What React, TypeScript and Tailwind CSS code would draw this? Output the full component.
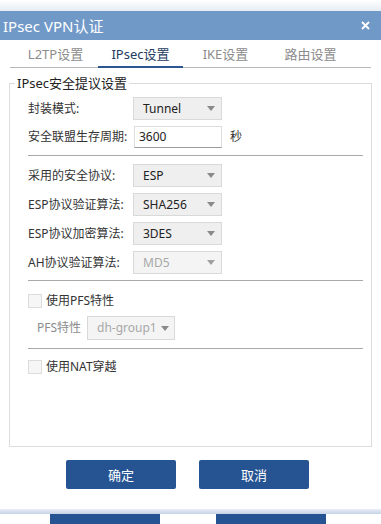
import React from "react";

type SelectRow = {
  label: string;
  value: string;
  disabled?: boolean;
};

const Arrow = ({ color = "#8a8a8a" }: { color?: string }) => (
  <svg width="8" height="5" viewBox="0 0 8 5">
    <path d="M0 0H8L4 5Z" fill={color} />
  </svg>
);

const Select = ({ value, disabled, className }: { value: string; disabled?: boolean; className?: string }) => (
  <div
    className={
      "h-[23px] flex items-center justify-between pl-[9px] pr-[6px] border border-[#d9d9d9] " +
      (disabled ? "bg-[#f4f4f4] text-[#a8a8a8] " : "bg-[#efefef] text-[#222] ") +
      (className ?? "")
    }
  >
    <span>{value}</span>
    <Arrow color={disabled ? "#a0a0a0" : "#8a8a8a"} />
  </div>
);

const Checkbox = ({ label }: { label: string }) => (
  <label className="flex items-center ml-[18px] h-[14px]">
    <span className="w-[14px] h-[14px] border border-[#dcdcdc] bg-[#f6f6f6]" />
    <span className="ml-[4px] text-[#333]">{label}</span>
  </label>
);

export default function App() {
  const algoRows: SelectRow[] = [
    { label: "采用的安全协议:", value: "ESP" },
    { label: "ESP协议验证算法:", value: "SHA256" },
    { label: "ESP协议加密算法:", value: "3DES" },
    { label: "AH协议验证算法:", value: "MD5", disabled: true },
  ];

  const tabs = ["L2TP设置", "IPsec设置", "IKE设置", "路由设置"];

  return (
    <div
      className="w-[381px] h-[524px] bg-white flex flex-col overflow-hidden text-[12px] leading-[16px] text-[#333]"
      style={{ fontFamily: '"Noto Sans", "Noto Sans CJK SC", sans-serif' }}
    >
      {/* 上方阴影 */}
      <div className="h-[11px] bg-gradient-to-b from-white to-[#e6ecf4]" />

      {/* 标题栏 */}
      <div className="h-[29px] bg-[#7199c8] flex items-center justify-between pl-[3px] pr-[11px] text-white">
        <span className="text-[15px] leading-[20px]">IPsec VPN认证</span>
        <svg width="9" height="9" viewBox="0 0 9 9">
          <path d="M1 1L8 8M8 1L1 8" stroke="white" strokeWidth="1.8" />
        </svg>
      </div>

      {/* 标签页 */}
      <div className="mx-[10px] h-[28px] border-b border-[#b8b8b8] flex items-end pl-[3px]">
        {tabs.map((t, i) => (
          <div
            key={t}
            className={
              "w-[85px] h-[27px] flex items-center justify-center text-[13px] " +
              (i === 1 ? "text-[#243b5e] border-b-[2px] border-[#2b5590] -mb-[1px]" : "text-[#8c8c8c]")
            }
          >
            {t}
          </div>
        ))}
      </div>

      {/* 设置区域 */}
      <fieldset className="mx-[9px] mt-[7px] h-[372px] border border-[#dcdcdc] pb-0">
        <legend className="ml-[5px] px-[2px] text-[13px] text-[#222]">IPsec安全提议设置</legend>

        <div className="flex items-center mt-[6px] pl-[18px]">
          <span className="w-[105px]">封装模式:</span>
          <Select value="Tunnel" className="w-[89px]" />
        </div>

        <div className="flex items-center mt-[6px] pl-[18px]">
          <span className="w-[106px]">安全联盟生存周期:</span>
          <div className="w-[88px] h-[22px] flex items-center pl-[4px] bg-white border border-[#dcdcdc] border-b-[#9a9a9a] text-[#222]">
            3600
          </div>
          <span className="ml-[8px]">秒</span>
        </div>

        <div className="ml-[18px] mr-[8px] mt-[7px] h-px bg-[#a9a9a9]" />

        <div className="flex flex-col gap-[6px] mt-[8px] pl-[18px]">
          {algoRows.map((r) => (
            <div key={r.label} className="flex items-center">
              <span className="w-[105px]">{r.label}</span>
              <Select value={r.value} disabled={r.disabled} className="w-[89px]" />
            </div>
          ))}
        </div>

        <div className="ml-[18px] mr-[8px] mt-[6px] h-px bg-[#a9a9a9]" />

        <div className="mt-[13px]">
          <Checkbox label="使用PFS特性" />
        </div>

        <div className="flex items-center mt-[8px] pl-[27px]">
          <span className="w-[50px] text-[#8c8c8c]">PFS特性</span>
          <div className="w-[88px] h-[24px] flex items-center justify-between pl-[9px] pr-[5px] border border-[#d9d9d9] bg-[#f4f4f4] text-[#a8a8a8] text-[12px] whitespace-nowrap">
            <span>dh-group1</span>
            <Arrow color="#8a8a8a" />
          </div>
        </div>

        <div className="ml-[18px] mr-[8px] mt-[8px] h-px bg-[#a9a9a9]" />

        <div className="mt-[11px]">
          <Checkbox label="使用NAT穿越" />
        </div>
      </fieldset>

      {/* 按钮 */}
      <div className="flex gap-[23px] mt-[13px] ml-[66px]">
        <button className="w-[110px] h-[29px] rounded-[2px] bg-[#265392] text-white text-[13px]">确定</button>
        <button className="w-[110px] h-[29px] rounded-[2px] bg-[#265392] text-white text-[13px]">取消</button>
      </div>

      {/* 底部 */}
      <div className="mt-[20px] h-[5px] bg-gradient-to-b from-[#e9eef6] to-[#c6d3e6]" />
      <div className="flex gap-[56px] ml-[50px]">
        <div className="w-[110px] h-[10px] bg-[#265392]" />
        <div className="w-[110px] h-[10px] bg-[#265392]" />
      </div>
    </div>
  );
}
